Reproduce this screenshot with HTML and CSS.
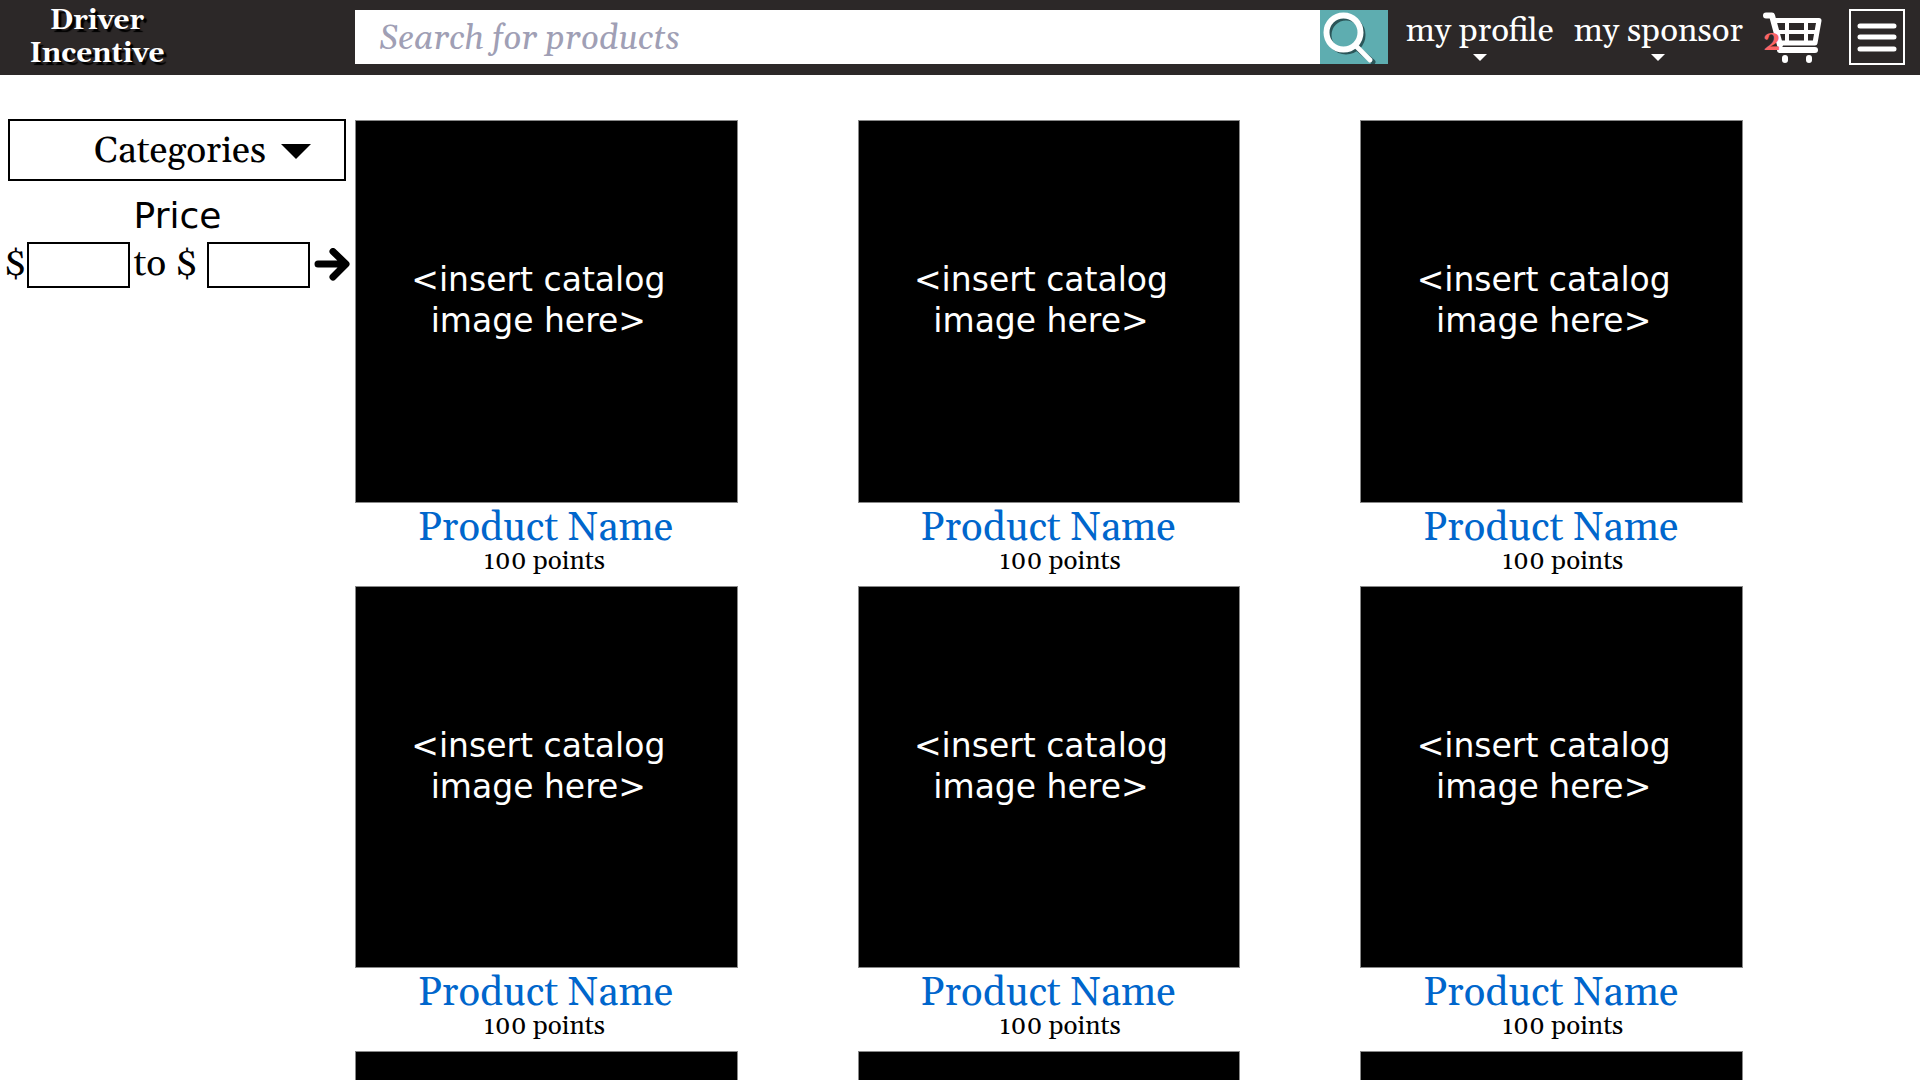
FILE: index.html
```html
<!DOCTYPE html>
<html lang="en">
<head>
<meta charset="utf-8">
<title>Driver Incentive</title>
<link rel="stylesheet" href="styles.css">
</head>
<body>
<header class="topbar">
  <a class="brand" href="#">Driver<br>Incentive</a>
  <form class="search">
    <input class="search-input" type="text" placeholder="Search for products" aria-label="Search for products">
    <button class="search-button" type="button" aria-label="Search">
      <svg width="68" height="54" viewBox="0 0 68 54" fill="none" stroke-linecap="round">
        <g stroke="#2b5558"><circle cx="26" cy="25" r="17" stroke-width="5"/><path d="M38 39L53 52" stroke-width="5"/></g>
        <g stroke="#fff"><circle cx="23.500" cy="22.500" r="17" stroke-width="6"/><path d="M36 36L50 50" stroke-width="5"/></g>
      </svg>
    </button>
  </form>
  <nav class="nav">
    <a class="nav-link" href="#">my profile<span class="caret"></span></a>
    <a class="nav-link" href="#">my sponsor<span class="caret"></span></a>
  </nav>
  <a class="cart" href="#" aria-label="Cart">
    <svg width="60" height="54" viewBox="0 0 60 54" fill="none" stroke="#fff">
      <path d="M3 5.500h6L17 35" stroke-width="6" stroke-linecap="round" stroke-linejoin="round"/>
      <path d="M11 10.500H56L52 33H17" stroke-width="5" stroke-linejoin="round"/>
      <path d="M14 22H53M24 10V33M43 10V33" stroke-width="4"/>
      <path d="M17 40H52" stroke-width="6" stroke-linecap="round"/>
      <g fill="#fff" stroke="none"><rect x="19" y="45" width="6" height="8" rx="3"/><rect x="43" y="45" width="6" height="8" rx="3"/></g>
    </svg>
    <span class="cart-count">2</span>
  </a>
  <button class="menu" type="button" aria-label="Menu">
    <svg width="40" height="30" viewBox="0 0 40 30" stroke="#fff" stroke-width="5" stroke-linecap="round"><path d="M3 4H37M3 15H37M3 27H37"/></svg>
  </button>
</header>
<div class="page">
  <aside class="filters">
    <button class="categories" type="button">Categories<span class="caret-large"></span></button>
    <h2 class="price-title">Price</h2>
    <form class="price">
      <label class="price-label" for="min">$</label>
      <input class="price-input" id="min" type="text">
      <label class="price-label price-to" for="max">to $</label>
      <input class="price-input" id="max" type="text">
      <button class="go" type="button" aria-label="Apply price">
        <svg width="36" height="34" viewBox="0 0 36 34" fill="none" stroke="#000" stroke-width="7" stroke-linecap="round" stroke-linejoin="round"><path d="M4 16H31M19 3.500L32 16L19 29"/></svg>
      </button>
    </form>
  </aside>
  <main class="catalog">
    <article class="product"><div class="picture">&lt;insert catalog<br>image here&gt;</div><a class="name" href="#">Product Name</a><p class="points">100 points</p></article>
    <article class="product"><div class="picture">&lt;insert catalog<br>image here&gt;</div><a class="name" href="#">Product Name</a><p class="points">100 points</p></article>
    <article class="product"><div class="picture">&lt;insert catalog<br>image here&gt;</div><a class="name" href="#">Product Name</a><p class="points">100 points</p></article>
    <article class="product"><div class="picture">&lt;insert catalog<br>image here&gt;</div><a class="name" href="#">Product Name</a><p class="points">100 points</p></article>
    <article class="product"><div class="picture">&lt;insert catalog<br>image here&gt;</div><a class="name" href="#">Product Name</a><p class="points">100 points</p></article>
    <article class="product"><div class="picture">&lt;insert catalog<br>image here&gt;</div><a class="name" href="#">Product Name</a><p class="points">100 points</p></article>
    <article class="product"><div class="picture"></div></article>
    <article class="product"><div class="picture"></div></article>
    <article class="product"><div class="picture"></div></article>
  </main>
</div>
</body>
</html>
```
FILE: styles.css
```css
* {
  box-sizing: border-box;
}

body {
  margin: 0;
  background: #fff;
  color: #000;
  font-family: Georgia, Gelasio, "Liberation Serif", serif;
}

a {
  color: inherit;
  text-decoration: none;
}

button,
input {
  font: inherit;
  color: inherit;
  padding: 0;
  border: 0;
  border-radius: 0;
  background: none;
}

svg {
  display: block;
}

/* Top bar */
.topbar {
  display: flex;
  align-items: center;
  height: 75px;
  padding: 0 15px 1px 0;
  background: #2c2828;
  color: #fff;
}

.brand {
  flex: 0 0 355px;
  padding: 1px 161px 0 0;
  font-size: 28px;
  line-height: 33px;
  font-weight: bold;
  text-align: center;
  text-shadow: 3px 3px 1px #000;
}

.search {
  display: flex;
  flex: 1;
  height: 54px;
}

.search-input {
  flex: 1;
  min-width: 0;
  padding: 4px 24px 0;
  background: #fff;
  color: #000;
  font-size: 34px;
  font-style: italic;
}

.search-input::placeholder {
  color: #a09fb5;
  opacity: 1;
}

.search-button {
  background: #5eadb0;
}

.nav {
  display: flex;
  gap: 20px;
  padding: 0 20px 0 18px;
  font-size: 33px;
  line-height: 38px;
}

.nav-link {
  display: flex;
  flex-direction: column;
  align-items: center;
  gap: 4px;
  padding-bottom: 2px;
}

.caret {
  border: 7px solid transparent;
  border-top-color: #fff;
  border-bottom: 0;
}

.cart {
  position: relative;
  margin-right: 26px;
}

.cart-count {
  position: absolute;
  left: 0;
  top: 16px;
  color: #fa6464;
  font-size: 28px;
  line-height: 33px;
  font-weight: bold;
}

.menu {
  display: grid;
  place-items: center;
  width: 56px;
  height: 56px;
  border: 2px solid #fff;
}

/* Page */
.page {
  display: flex;
  padding: 44px 177px 44px 0;
}

.filters {
  flex: 0 0 355px;
}

.categories {
  display: flex;
  align-items: center;
  justify-content: flex-end;
  gap: 15px;
  width: 338px;
  height: 62px;
  margin-left: 8px;
  padding: 2px 33px 0 0;
  border: 2px solid #000;
  font-size: 37px;
}

.caret-large {
  border: 15px solid transparent;
  border-top-color: #000;
  border-bottom: 0;
}

.price-title {
  margin: 13px 0 4px;
  font-family: "DejaVu Sans", sans-serif;
  font-size: 36px;
  line-height: 44px;
  font-weight: normal;
  text-align: center;
}

.price {
  display: flex;
  align-items: center;
  padding-left: 4px;
  font-size: 37px;
  line-height: 40px;
}

.price-label {
  flex: 0 0 22px;
}

.price-to {
  flex-basis: 77px;
  padding-left: 4px;
}

.price-input {
  width: 103px;
  height: 46px;
  border: 2px solid #000;
}

.go {
  margin-left: 4px;
}

/* Catalog */
.catalog {
  display: grid;
  flex: 1;
  grid-template-columns: repeat(3, 1fr);
  gap: 14px 120px;
  padding-top: 1px;
}

.product {
  text-align: center;
}

.picture {
  display: grid;
  place-items: center;
  align-content: center;
  aspect-ratio: 1;
  padding: 0 16px 22px 0;
  border: 1px solid #888;
  background: #000;
  color: #fff;
  font-family: "DejaVu Sans", sans-serif;
  font-size: 33px;
  line-height: 41px;
}

.name {
  display: block;
  padding: 3px 2px 0 0;
  font-size: 40px;
  line-height: 46px;
  color: #0066cc;
}

.points {
  margin: 0;
  padding-right: 4px;
  font-size: 26px;
  line-height: 20px;
}

.product:not(:nth-child(3n + 1)) .points {
  padding: 0 0 0 22px;
}
```
